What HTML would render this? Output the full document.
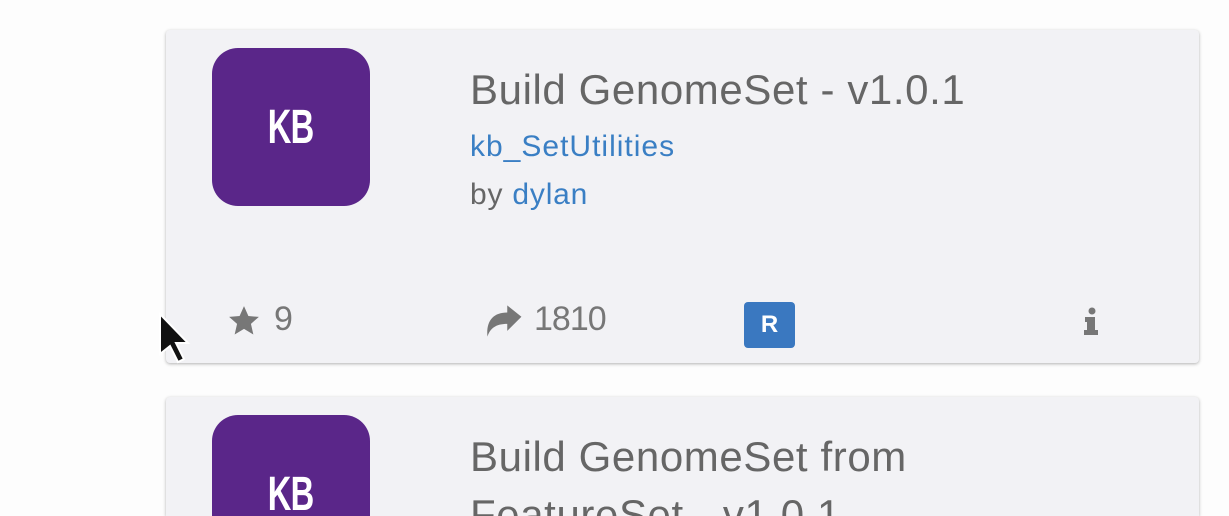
<!DOCTYPE html>
<html style="overflow:hidden;height:516px"><head><style>
body{margin:0;width:1229px;height:516px;background:#fdfdfd;overflow:hidden;position:relative;font-family:"Liberation Sans",sans-serif}
.card{position:absolute;left:166px;width:1033px;background:#f2f2f5;border-radius:4px;box-shadow:0 1px 3px rgba(0,0,0,.3);overflow:hidden}
.logo{position:absolute;left:46px;width:158px;height:158px;background:#5a2689;border-radius:26px;color:#fff;font-family:"Liberation Sans Narrow","Liberation Sans",sans-serif;font-weight:bold;font-size:48px;display:flex;align-items:center;justify-content:center;letter-spacing:-1px}
.logo span{display:inline-block;transform:scaleX(.68)}
.title{position:absolute;left:304px;font-size:42px;color:#666;letter-spacing:0.6px;line-height:58px;white-space:nowrap}
.mod{position:absolute;left:304px;font-size:30px;color:#3a7fc4;letter-spacing:1px}
.by{position:absolute;left:304px;font-size:30px;color:#666;letter-spacing:0.8px}
.by a{color:#3a7fc4}
.foot{position:absolute;font-size:34px;color:#777;letter-spacing:-1px}
</style></head><body>
<div class="card" style="top:30px;height:333px">
 <div class="logo" style="top:18px"><span>KB</span></div>
 <div class="title" style="top:31px">Build GenomeSet - v1.0.1</div>
 <div class="mod" style="top:100px">kb_SetUtilities</div>
 <div class="by" style="top:148px">by <a>dylan</a></div>
 <svg style="position:absolute;left:60px;top:274px" width="36" height="34" viewBox="0 0 24 24"><path fill="#777" d="M12 1.5l3.1 7 7.4.6-5.6 4.9 1.7 7.5L12 17.6 5.4 21.5l1.7-7.5L1.5 9.1l7.4-.6z"/></svg>
 <div class="foot" style="left:108px;top:270px">9</div>
 <svg style="position:absolute;left:316px;top:274px" width="42" height="34" viewBox="0 0 28 24"><path fill="#777" d="M27 9L17 1v5C7 6 2 12 3 23c2-6 6-9 14-9v5z"/></svg>
 <div class="foot" style="left:368px;top:270px">1810</div>
 <div style="position:absolute;left:578px;top:272px;width:51px;height:46px;background:#3a78c0;border-radius:4px;color:#fff;font-weight:bold;font-size:24px;text-align:center;line-height:46px">R</div>
 <svg style="position:absolute;left:918px;top:277px" width="14" height="28" viewBox="0 0 14 28"><circle cx="8" cy="4" r="3.5" fill="#777"/><path fill="#777" d="M1 10h10v13h3v5H0v-5h3v-8H1z"/></svg>
</div>
<div style="position:absolute;left:152px;top:308px">
<svg width="40" height="56" viewBox="0 0 20 28"><path d="M4 3v20l5-4 4 8 3-1.5-4-8h6z" fill="#111" stroke="#fff" stroke-width="1"/></svg>
</div>
<div class="card" style="top:397px;height:119px;border-radius:4px 4px 0 0">
 <div class="logo" style="top:18px"><span>KB</span></div>
 <div class="title" style="top:31px">Build GenomeSet from<br>FeatureSet - v1.0.1</div>
</div>
</body></html>
